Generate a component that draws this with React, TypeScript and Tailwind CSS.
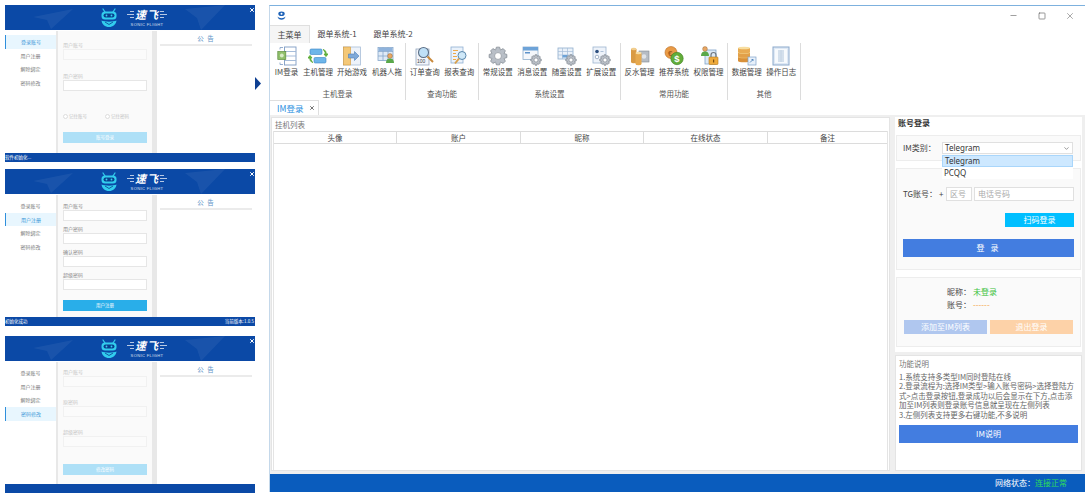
import React from "react";
import { Minus, Square, X, ChevronDown } from "lucide-react";

// gear outline, computed from tooth count
function gearPath(cx: number, cy: number, r: number, teeth = 8) {
  const pts: string[] = [];
  const inner = r * 0.74;
  for (let i = 0; i < teeth; i++) {
    const a = (i / teeth) * Math.PI * 2;
    const w = Math.PI / teeth;
    const list = [
      [inner, a - w * 0.95],
      [r, a - w * 0.45],
      [r, a + w * 0.45],
      [inner, a + w * 0.95],
    ];
    list.forEach(([rad, ang]) => {
      pts.push(`${(cx + rad * Math.cos(ang)).toFixed(2)} ${(cy + rad * Math.sin(ang)).toFixed(2)}`);
    });
  }
  return "M" + pts.join("L") + "Z";
}

const Gear = ({ cx, cy, r }: { cx: number; cy: number; r: number }) => (
  <g>
    <path d={gearPath(cx, cy, r)} fill="#b9bfc7" stroke="#7d848d" strokeWidth="0.7" />
    <circle cx={cx} cy={cy} r={r * 0.38} fill="#fff" stroke="#7d848d" strokeWidth="0.6" />
  </g>
);

const Cyl = ({ x, y, w, h, fill, top }: { x: number; y: number; w: number; h: number; fill: string; top: string }) => (
  <g>
    <rect x={x} y={y} width={w} height={h} fill={fill} />
    <ellipse cx={x + w / 2} cy={y + h} rx={w / 2} ry={1.3} fill={fill} />
    <ellipse cx={x + w / 2} cy={y} rx={w / 2} ry={1.3} fill={top} />
  </g>
);

const Person = ({ x, y }: { x: number; y: number }) => (
  <g>
    <circle cx={x} cy={y} r={2.4} fill="#e8a765" stroke="#8a5a2b" strokeWidth="0.4" />
    <path d={`M${x - 4} ${y + 7}c0-3 1.5-4.4 4-4.4s4 1.4 4 4.4z`} fill="#5aa84a" />
  </g>
);

const icons: Record<string, React.ReactNode> = {
  im: (
    <>
      <rect x="7.5" y="1" width="11.5" height="18" fill="#fff" stroke="#7e9cc4" strokeWidth="0.9" />
      <path d="M8 5.5h11M8 10h11M8 14.500h11" stroke="#9db6d6" strokeWidth="0.9" />
      <path d="M3 1.500h3M3 18.500h3M3 1.500v2M3 16.500v2" stroke="#7e9cc4" strokeWidth="0.8" fill="none" />
      <rect x="0.800" y="5.500" width="8" height="8" fill="#8fbf6a" stroke="#5e8f3f" strokeWidth="0.7" />
      <circle cx="4.800" cy="9.500" r="1.900" fill="#d8ecc6" />
    </>
  ),
  host: (
    <>
      <rect x="2" y="3" width="12" height="5.500" rx="1.200" fill="#6db6ea" stroke="#3a85c2" strokeWidth="0.6" />
      <rect x="6" y="11.500" width="12" height="5.500" rx="1.200" fill="#6db6ea" stroke="#3a85c2" strokeWidth="0.6" />
      <path d="M15 3.500c2.500.5 3.500 2.500 3 5.500M18 10.500l-2-2.500h4z" fill="#5fae3a" stroke="#5fae3a" strokeWidth="1" />
      <path d="M5 16.500c-2.500-.5-3.500-2.500-3-5.500M2 9.500l-2 2.500h4z" fill="#5fae3a" stroke="#5fae3a" strokeWidth="1" />
    </>
  ),
  game: (
    <>
      <rect x="1.500" y="1" width="17" height="18" fill="#eef3fa" stroke="#a7bdd8" strokeWidth="0.8" />
      <rect x="1.500" y="1" width="7" height="18" fill="#f4c877" stroke="#d69a3a" strokeWidth="0.6" />
      <path d="M6.500 8h6V5.500l4.500 4.500-4.500 4.500V12h-6z" fill="#7fa9d8" stroke="#4d7fb8" strokeWidth="0.6" />
    </>
  ),
  robot: (
    <>
      <rect x="1" y="1.500" width="15" height="13" fill="#dfeaf6" stroke="#86a7cc" strokeWidth="0.8" />
      <path d="M1 5.500h15M1 10h15M6 1.500v13M11 1.500v13" stroke="#86a7cc" strokeWidth="0.8" />
      <rect x="1.500" y="2" width="14" height="3" fill="#8fb3dc" />
      <Person x={13} y={10} />
    </>
  ),
  order: (
    <>
      <rect x="1" y="3" width="13" height="16" fill="#f2f5fa" stroke="#93a5bd" strokeWidth="0.8" />
      <text x="2" y="17" fontSize="5" fill="#444" fontFamily="Liberation Sans">100</text>
      <circle cx="8.500" cy="6.500" r="5" fill="#bfe0f7" stroke="#5d6f85" strokeWidth="1.100" />
      <path d="M12.500 10.500l5.500 5.500" stroke="#c98a3c" strokeWidth="2" />
    </>
  ),
  report: (
    <>
      <rect x="2" y="1" width="12" height="16" fill="#eaf2fb" stroke="#8fb0d3" strokeWidth="0.8" />
      <path d="M4 4.500h5M4 7.500h3M4 10.500h4M4 13.500h3" stroke="#eda94a" strokeWidth="1.200" />
      <circle cx="13" cy="9.500" r="4" fill="#cfe8f8" stroke="#5b87ab" strokeWidth="1" />
      <path d="M10 12.500l-4 5" stroke="#d9a04c" strokeWidth="2" />
    </>
  ),
  gear: <Gear cx={10} cy={10} r={9} />,
  msg: (
    <>
      <rect x="1" y="1" width="15" height="12.500" fill="#f4f7fb" stroke="#90aecd" strokeWidth="0.8" />
      <rect x="1" y="1" width="15" height="3.500" fill="#6da3d8" />
      <rect x="3" y="6" width="5" height="1.500" fill="#5d92ca" />
      <Gear cx={14} cy={14} r={5.300} />
    </>
  ),
  grid: (
    <>
      <rect x="1" y="2" width="15" height="11" fill="#eaf1f9" stroke="#90aecd" strokeWidth="0.8" />
      <path d="M1 5.500h15M1 9h15M5.500 2v11M10.500 2v11" stroke="#a3bcd8" strokeWidth="0.7" />
      <rect x="5.500" y="9" width="5" height="2.500" fill="#6da3d8" />
      <Gear cx={14} cy={14} r={5.300} />
    </>
  ),
  ext: (
    <>
      <rect x="2" y="1" width="13" height="16" fill="#eef3fa" stroke="#9db4cf" strokeWidth="0.8" />
      <circle cx="6" cy="5.500" r="1.800" fill="#2d4f7f" />
      <circle cx="6" cy="11" r="1.800" fill="#fff" stroke="#7f95b0" strokeWidth="0.7" />
      <path d="M9.500 5.500h3" stroke="#9db4cf" strokeWidth="0.8" />
      <Gear cx={14} cy={14} r={5.300} />
    </>
  ),
  rebate: (
    <>
      <rect x="9" y="5" width="10" height="11" fill="#b6bcc4" stroke="#808890" strokeWidth="0.6" />
      <circle cx="14" cy="10.500" r="2.300" fill="#dfe3e8" />
      <Cyl x={1} y={3} w={5.500} h={13} fill="#d99a44" top="#f1cd8d" />
      <Cyl x={5.500} y={7} w={6} h={11} fill="#e6a94f" top="#f7dda6" />
    </>
  ),
  coin: (
    <>
      <circle cx="7" cy="6.500" r="6" fill="#e99b47" stroke="#b86d22" strokeWidth="0.6" />
      <text x="4" y="9.500" fontSize="8" fontWeight="700" fill="#a85d1a" fontFamily="Liberation Sans">€</text>
      <circle cx="13" cy="12.500" r="6.200" fill="#62ad3a" stroke="#3f7f22" strokeWidth="0.6" />
      <text x="10.300" y="16" fontSize="9.500" fontWeight="700" fill="#fff" fontFamily="Liberation Sans">$</text>
    </>
  ),
  auth: (
    <>
      <rect x="6" y="4" width="11" height="14" fill="#dce9f6" stroke="#7fa2c8" strokeWidth="0.8" />
      <Person x={6} y={3} />
      <rect x="10" y="11" width="9" height="7.500" rx="0.800" fill="#eeaa3c" stroke="#b6791b" strokeWidth="0.6" />
      <path d="M12 11V9a2.500 2.500 0 015 0v2" fill="none" stroke="#707880" strokeWidth="1.200" />
      <rect x="14" y="13.500" width="1.200" height="3" fill="#7a4e12" />
    </>
  ),
  db: (
    <>
      <Cyl x={1} y={11} w={12} h={4} fill="#d9913a" top="#f3c978" />
      <Cyl x={1} y={6.500} w={12} h={4} fill="#e2a049" top="#f6d68f" />
      <Cyl x={1} y={2} w={12} h={4} fill="#e8ab53" top="#f8dea0" />
      <rect x="11" y="11" width="8" height="8" fill="#e7f0fa" stroke="#7fa2c8" strokeWidth="0.7" />
      <path d="M13 16.500l3-3M16 15v-1.500h-1.500" stroke="#3f78b5" strokeWidth="0.8" fill="none" />
    </>
  ),
  log: (
    <>
      <rect x="2" y="1" width="16" height="18" fill="#dfe9f5" stroke="#8ca9cb" strokeWidth="1" />
      <rect x="4" y="3" width="12" height="14" fill="#f7fafd" />
      <path d="M7 5h6M7 7h6M7 9h6M7 11h6M7 13h6M7 15h6" stroke="#9fb7d2" strokeWidth="0.8" />
      <path d="M10 4v12" stroke="#c1d1e3" strokeWidth="0.8" />
    </>
  ),
};

const groups = [
  {
    name: "主机登录",
    width: "w-[136px]",
    items: [
      ["IM登录", "im", "w-[31px]"],
      ["主机管理", "host", "w-[32px]"],
      ["开始游戏", "game", "w-[36px]"],
      ["机器人拖", "robot", "w-[34px]"],
    ],
  },
  {
    name: "查询功能",
    width: "w-[73px]",
    items: [
      ["订单查询", "order", "w-[34.500px]"],
      ["报表查询", "report", "w-[34.500px]"],
    ],
  },
  {
    name: "系统设置",
    width: "w-[142px]",
    items: [
      ["常规设置", "gear", "w-[34.500px]"],
      ["消息设置", "msg", "w-[34.500px]"],
      ["随蛮设置", "grid", "w-[34.500px]"],
      ["扩展设置", "ext", "w-[34.500px]"],
    ],
  },
  {
    name: "常用功能",
    width: "w-[107px]",
    items: [
      ["反水管理", "rebate", "w-[34.500px]"],
      ["推荐系统", "coin", "w-[34.500px]"],
      ["权限管理", "auth", "w-[34.500px]"],
    ],
  },
  {
    name: "其他",
    width: "w-[73px]",
    items: [
      ["数据管理", "db", "w-[34.500px]"],
      ["操作日志", "log", "w-[34.500px]"],
    ],
  },
];

const Logo = () => (
  <div className="flex items-center gap-[9px]">
    <svg width="18" height="20" viewBox="0 0 18 20">
      <path d="M5 4L3 1M13 4l2-3" stroke="#35d0ee" strokeWidth="1.200" strokeLinecap="round" />
      <rect x="1.500" y="3.500" width="15" height="8" rx="3.500" fill="#32cdee" />
      <rect x="3.500" y="5.500" width="11" height="4" rx="2" fill="#0a3f8f" />
      <circle cx="6.500" cy="7.500" r="0.900" fill="#35d0ee" />
      <circle cx="11.500" cy="7.500" r="0.900" fill="#35d0ee" />
      <path d="M1.500 12.500c3 1.500 12 1.500 15 0-.5 4-3.500 6.500-7.500 6.500s-7-2.500-7.500-6.500z" fill="#32cdee" />
      <path d="M5 14l4 2.500 4-2.500" fill="none" stroke="#0a3f8f" strokeWidth="0.800" />
    </svg>
    <div className="flex flex-col items-center">
      <div className="flex items-center gap-[1px] h-[13px]">
        <div className="flex flex-col gap-[2px] items-end">
          <div className="w-[4px] h-[1px] bg-white/70" />
          <div className="w-[7px] h-[1px] bg-white/70" />
          <div className="w-[4px] h-[1px] bg-white/70" />
        </div>
        <span className="font-['Noto_Sans_CJK_SC'] italic font-bold text-white text-[11px] leading-[13px] tracking-[1px]">速飞</span>
        <div className="flex flex-col gap-[2px]">
          <div className="w-[4px] h-[1px] bg-white/70" />
          <div className="w-[7px] h-[1px] bg-white/70" />
          <div className="w-[4px] h-[1px] bg-white/70" />
        </div>
      </div>
      <span className="mt-[1px] text-[4px] leading-[5px] tracking-[0.4px] text-white/80 font-['Liberation_Sans']">SONIC FLIGHT</span>
    </div>
  </div>
);

const Field = ({ label, active, dim, gap }: { label: string; active?: boolean; dim?: boolean; gap?: string }) => (
  <div className={gap}>
    <div className={`h-[8px] leading-[8px] text-[5px] ${dim ? "text-[#c6c6c6]" : "text-[#8a8a8a]"}`}>{label}</div>
    <div className={`h-[11px] ${active ? "bg-white border border-[#e6e6e6]" : "bg-[#fbfbfb] border border-[#f1f1f1]"}`} />
  </div>
);

const LoginWindow = ({
  active,
  footer,
  version,
  className,
  children,
}: {
  active: number;
  footer?: string;
  version?: string;
  className?: string;
  children: React.ReactNode;
}) => (
  <div className={`w-[250px] h-[157px] flex flex-col bg-white ${className ?? ""}`}>
    <div className="relative h-[25px] shrink-0 bg-[#0b49a6] flex items-center justify-center overflow-hidden">
      <svg className="absolute left-0 top-0" width="250" height="25" viewBox="0 0 250 25">
        <path d="M28 12L68 4 46 24 42 15z" fill="#fff" opacity="0.06" />
        <path d="M180 4l40-4-24 25-4-12z" fill="#fff" opacity="0.06" />
      </svg>
      <div className="relative ml-[7px]">
        <Logo />
      </div>
      <X className="absolute right-[0.500px] top-[2px] size-[6px] text-white" strokeWidth={4} />
    </div>
    <div className="flex-1 flex mt-[1px] min-h-0">
      <div className="w-[51px] shrink-0 pt-[4px]">
        {["登录账号", "用户注册", "解除绑定", "密码修改"].map((t, i) => (
          <div
            key={t}
            className={`h-[13.700px] flex items-center justify-center text-[5px] ${
              i === active ? "bg-[#e8f6fe] text-[#3a97d8] border-l border-[#2f8fdc]" : "text-[#777]"
            }`}
          >
            {t}
          </div>
        ))}
      </div>
      <div className="w-[98px] shrink-0 border-x-2 border-[#e8e8e8] bg-[#fafafa] px-[5px]">{children}</div>
      <div className="w-[3px] bg-[#e8e8e8]" />
      <div className="flex-1 px-[3px] pt-[2px]">
        <div className="text-center text-[6.500px] leading-[10px] tracking-[1px] text-[#5d92c6] pb-[1px] border-b-2 border-[#ebebeb]">公 告</div>
      </div>
    </div>
    <div className="h-[9px] shrink-0 bg-[#0b49a6] flex items-center justify-between text-[4.500px] text-white">
      <span>{footer}</span>
      <span className="pr-[1px]">{version}</span>
    </div>
  </div>
);

const Radio = ({ label }: { label: string }) => (
  <div className="flex items-center gap-[1px] w-[43px] text-[4.500px] text-[#c4c4c4]">
    <div className="size-[5px] rounded-full border-[0.5px] border-[#ddd] bg-white" />
    {label}
  </div>
);

export default function App() {
  return (
    <div className="w-[1087px] h-[497px] flex bg-white overflow-hidden font-['Noto_Sans_CJK_SC','Liberation_Sans',sans-serif]">
      {/* left: login window states */}
      <div className="ml-[5px] pt-[5px] w-[250px] shrink-0 flex flex-col">
        <LoginWindow active={0} footer="软件初始化...">
          <div className="pt-[10px]">
            <Field label="用户账号" dim />
            <Field label="用户密码" active dim gap="mt-[12px]" />
            <div className="mt-[21px] h-[8px] flex items-center">
              <Radio label="记住账号" />
              <Radio label="记住密码" />
            </div>
            <div className="mt-[12px] h-[11px] bg-[#aee0f7] flex items-center justify-center text-[4.500px] text-white">账号登录</div>
          </div>
        </LoginWindow>
        <LoginWindow active={1} footer="初始化成功" version="当前版本:1.0.5" className="mt-[7px]">
          <div className="pt-[7px] flex flex-col gap-[4px]">
            <Field label="用户账号" active />
            <Field label="用户密码" active />
            <Field label="确认密码" active />
            <Field label="超级密码" active />
            <div className="mt-[6px] h-[11px] bg-[#29aee9] flex items-center justify-center text-[4.500px] text-white">用户注册</div>
          </div>
        </LoginWindow>
        <LoginWindow active={3} className="mt-[10px]">
          <div className="pt-[6px] flex flex-col gap-[11px]">
            <Field label="用户账号" dim />
            <Field label="原密码" dim />
            <Field label="超级密码" dim />
            <div className="mt-[6px] h-[11px] bg-[#aee0f7] flex items-center justify-center text-[4.500px] text-white">修改密码</div>
          </div>
        </LoginWindow>
      </div>

      {/* arrow */}
      <div className="w-[14px] shrink-0 pt-[77px]">
        <svg width="6" height="13" viewBox="0 0 6 13">
          <path d="M0 0l6 6.500L0 13z" fill="#0e3f92" />
        </svg>
      </div>

      {/* main window */}
      <div className="mt-[5px] mb-[5px] w-[816px] shrink-0 flex flex-col border-t border-t-[#7db1de] border-l border-l-[#c4d8ea] bg-white">
        <div className="h-[19px] shrink-0 flex items-center justify-between pl-[7px] pr-[10px]">
          <svg width="9" height="9" viewBox="0 0 9 9">
            <ellipse cx="4.500" cy="2.800" rx="3.200" ry="2.300" fill="#1d62b8" />
            <circle cx="4.500" cy="2.800" r="1" fill="#fff" />
            <path d="M0.500 5.500c2 2.200 6 2.200 8 0-.5 2.300-2 3.300-4 3.300s-3.500-1-4-3.300z" fill="#1d62b8" />
          </svg>
          <div className="flex items-center gap-[19px] text-[#555]">
            <Minus className="size-[9px] mr-[1px]" strokeWidth={1.500} />
            <Square className="size-[8px]" strokeWidth={1.800} />
            <X className="size-[10px]" strokeWidth={1.200} />
          </div>
        </div>

        <div className="h-[18px] shrink-0 flex items-stretch text-[8px] text-[#444]">
          <div className="w-[40px] flex items-center justify-center bg-[#f5f5f5] border-t border-r border-[#dfdfdf]">主菜单</div>
          <div className="w-[54px] flex items-center justify-center">跟单系统-1</div>
          <div className="w-[58px] flex items-center justify-center">跟单系统-2</div>
        </div>

        <div className="h-[57px] shrink-0 flex">
          {groups.map((g) => (
            <div key={g.name} className={`${g.width} shrink-0 flex flex-col items-center border-r border-[#dcdcdc]`}>
              <div className="self-stretch flex justify-center pt-[3px]">
                {g.items.map(([label, icon, width]) => (
                  <div key={label} className={`${width} shrink-0 flex flex-col items-center`}>
                    <svg width="20" height="20" viewBox="0 0 20 20">
                      {icons[icon]}
                    </svg>
                    <span className="text-[7.500px] leading-[11px] whitespace-nowrap text-[#444]">{label}</span>
                  </div>
                ))}
              </div>
              <div className="mt-[11px] text-[7.500px] leading-[11px] text-[#555]">{g.name}</div>
            </div>
          ))}
        </div>

        <div className="h-[15px] shrink-0 flex">
          <div className="w-[49px] flex items-center bg-white border-t border-r border-[#dfdfdf] pl-[7px] gap-[6px]">
            <span className="text-[8.500px] text-[#2b8fe0]">IM登录</span>
            <X className="size-[6px] text-[#444]" strokeWidth={3} />
          </div>
        </div>

        <div className="flex-1 min-h-0 flex bg-[#efefef] pt-[2px] pb-[3px] pl-[1px] pr-[2px]">
          <div className="w-[619px] shrink-0 flex flex-col bg-white border border-[#e4e4e4] px-[1px]">
            <div className="h-[13px] shrink-0 flex items-center pl-[2px] text-[7.500px] text-[#777]">挂机列表</div>
            <div className="flex-1 border-x border-[#e4e4e4]">
              <div className="h-[13px] grid grid-cols-[123px_124px_123px_124px_1fr] border-y border-[#dcdcdc] text-[7.500px] text-[#444]">
                {["头像", "账户", "昵称", "在线状态", "备注"].map((c, i) => (
                  <div key={c} className={`flex items-center justify-center ${i < 4 ? "border-r border-[#dcdcdc]" : ""}`}>{c}</div>
                ))}
              </div>
            </div>
          </div>

          <div className="ml-[5px] flex-1 flex flex-col gap-[3px] mr-[1px]">
            <div className="h-[235px] shrink-0 bg-white flex flex-col px-[1px]">
              <div className="h-[18px] shrink-0 pl-[2px] text-[8px] font-bold leading-[12px] text-[#333]">账号登录</div>
              <div className="relative h-[26px] shrink-0 flex items-center pl-[6px] bg-[#fafafa] border border-[#ededed] text-[8px] text-[#444]">
                <span className="w-[39px]">IM类别：</span>
                <div className="w-[131px] h-[12px] flex items-center justify-between bg-white border border-[#e0e0e0] pl-[2px] pr-[2px] text-[8px] font-['Noto_Sans','Liberation_Sans',sans-serif] text-[#333]">
                  Telegram
                  <ChevronDown className="size-[7px] text-[#555]" />
                </div>
                <div className="absolute z-10 left-[45px] top-[19px] w-[131px] h-[24px] bg-white text-[8px] font-['Noto_Sans','Liberation_Sans',sans-serif] text-[#333]">
                  <div className="h-[12px] flex items-center pl-[2px] bg-[#cde8ff] border border-[#a9d6fb]">Telegram</div>
                  <div className="h-[12px] flex items-center pl-[2px]">PCQQ</div>
                </div>
              </div>

              <div className="mt-[7px] h-[102px] shrink-0 bg-[#fafafa] border border-[#ededed] px-[6px] pt-[18px]">
                <div className="flex items-center h-[14px] text-[8px] text-[#444]">
                  <span className="w-[36px]">TG账号：</span>
                  <span className="w-[7px]">+</span>
                  <div className="w-[26px] h-[14px] flex items-center pl-[3px] bg-white border border-[#e0e0e0] text-[#aaa]">区号</div>
                  <div className="ml-[2px] w-[100px] h-[14px] flex items-center pl-[3px] bg-white border border-[#e0e0e0] text-[#aaa]">电话号码</div>
                </div>
                <div className="mt-[12px] flex justify-end">
                  <div className="w-[69px] h-[14px] flex items-center justify-center bg-[#00bfff] text-[8px] text-white">扫码登录</div>
                </div>
                <div className="mt-[12px] h-[18px] flex items-center justify-center bg-[#437de0] text-[8px] tracking-[2px] text-white">登 录</div>
              </div>

              <div className="mt-[7px] h-[70px] shrink-0 bg-[#fafafa] border border-[#ededed] px-[7px] pt-[7px]">
                <div className="flex h-[13px] items-center text-[8px] text-[#444]">
                  <span className="w-[67px] text-right">昵称：</span>
                  <span className="ml-[2px] text-[#3fc23f]">未登录</span>
                </div>
                <div className="flex h-[13px] items-center text-[8px] text-[#444]">
                  <span className="w-[67px] text-right">账号：</span>
                  <span className="ml-[2px] text-[#f5a23c]">------</span>
                </div>
                <div className="mt-[9px] flex gap-[3px] text-[8px] text-white">
                  <div className="w-[83px] h-[14px] flex items-center justify-center bg-[#b0c7ef]">添加至IM列表</div>
                  <div className="w-[83px] h-[14px] flex items-center justify-center bg-[#fdd2a8]">退出登录</div>
                </div>
              </div>
            </div>

            <div className="flex-1 bg-white border border-[#e4e4e4] px-[3px] pt-[2px] text-[7.500px] text-[#666]">
              <div className="leading-[11px] text-[#777]">功能说明</div>
              <div className="mt-[3px] leading-[9.400px] text-[#666]">
                <div>1.系统支持多类型IM同时登陆在线</div>
                <div>2.登录流程为:选择IM类型&gt;输入账号密码&gt;选择登陆方式&gt;点击登录按钮,登录成功以后会显示在下方,点击添加至IM列表则登录账号信息就呈现在左侧列表</div>
                <div>3.左侧列表支持更多右键功能,不多说明</div>
              </div>
              <div className="mt-[6px] h-[18px] flex items-center justify-center bg-[#437de0] text-[8px] text-white">IM说明</div>
            </div>
          </div>
        </div>

        <div className="h-[18px] shrink-0 flex items-center justify-end pr-[18px] bg-[#0a5cbd] text-[8px]">
          <span className="text-white">网络状态：</span>
          <span className="text-[#2fdc5a]">连接正常</span>
        </div>
      </div>
    </div>
  );
}
